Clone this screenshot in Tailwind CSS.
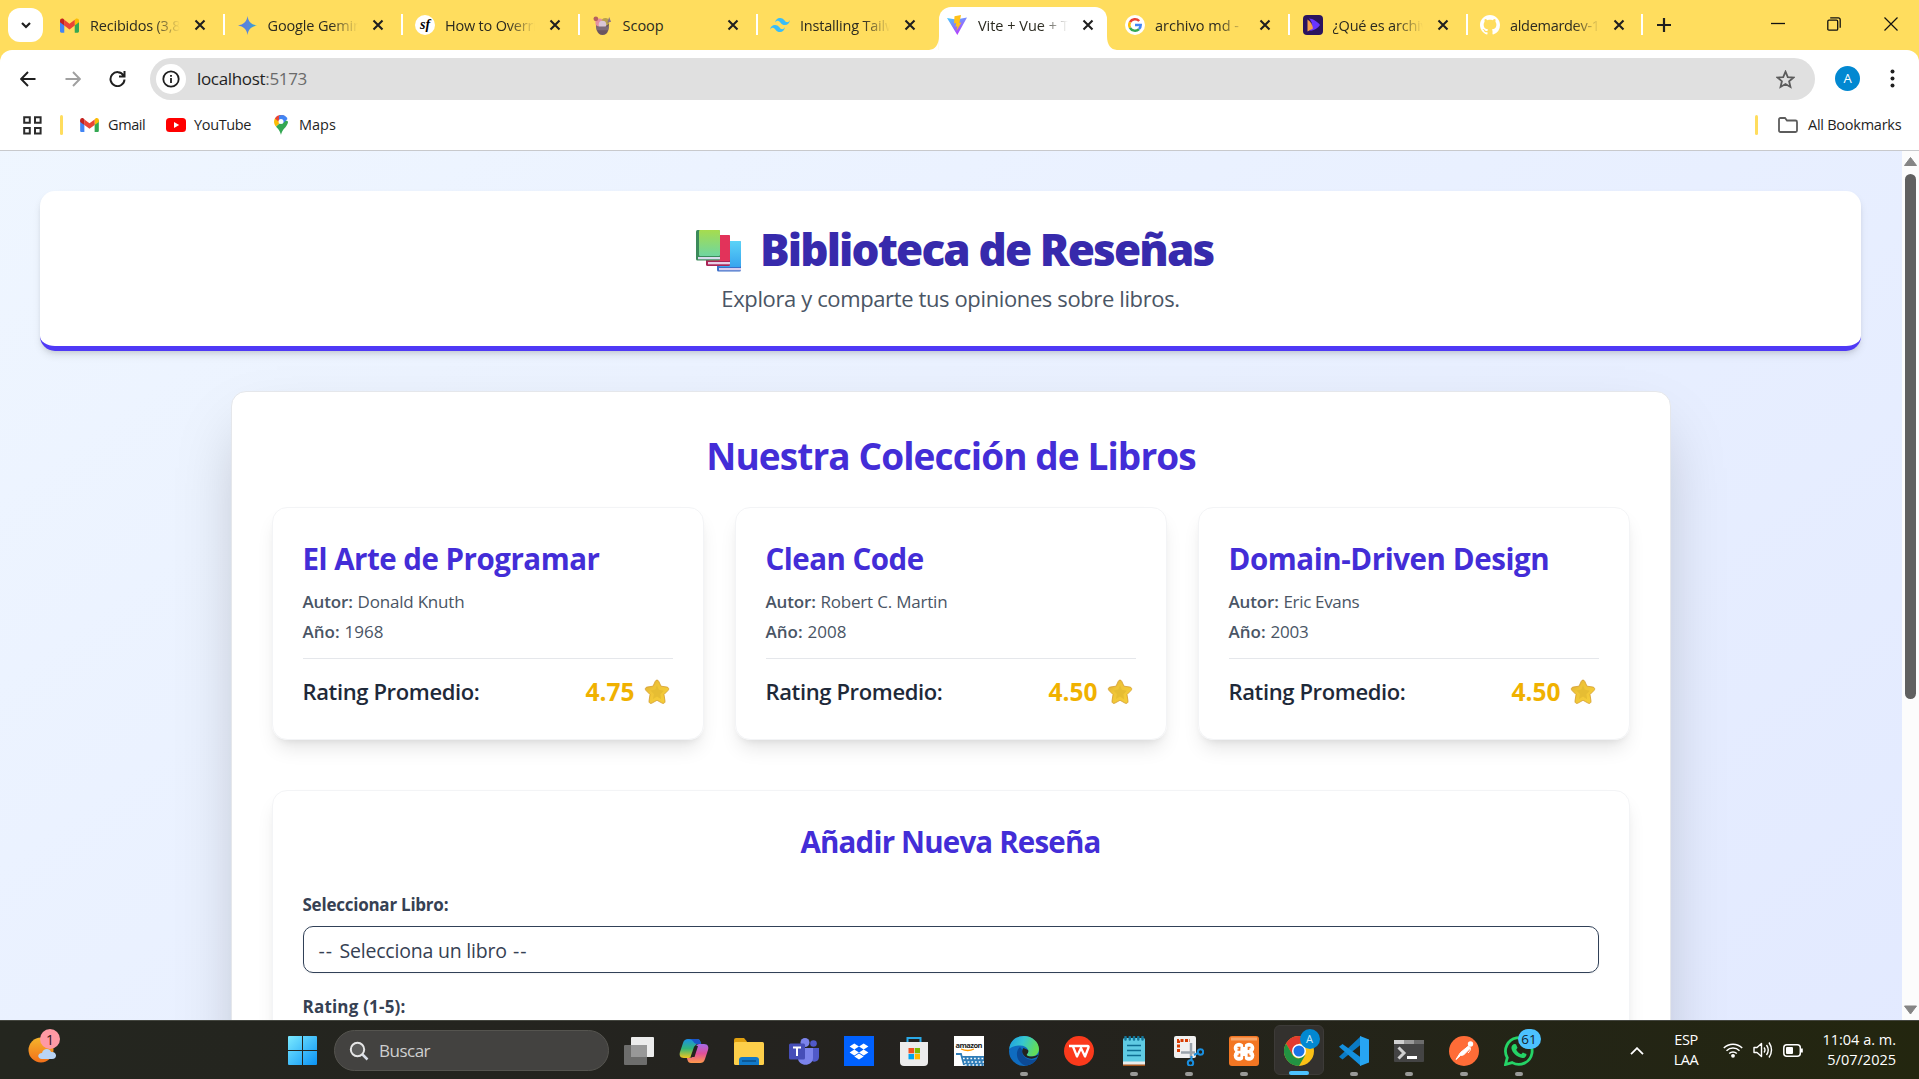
<!DOCTYPE html>
<html lang="es">
<head>
<meta charset="utf-8">
<title>Biblioteca de Reseñas</title>
<script src="https://cdn.jsdelivr.net/npm/@tailwindcss/browser@4"></script>
</head>
<body class="bg-white font-['Open_Sans','Noto_Sans',sans-serif]">
<svg width="0" height="0" class="absolute">
  <defs>
    <symbol id="x" viewBox="0 0 12 12"><path d="M1.500 1.500l9 9M10.500 1.500l-9 9" stroke="#1f1f1f" stroke-width="2.100" fill="none"/></symbol>
    <symbol id="gmail" viewBox="0 0 20 15"><path d="M0 2v11.600C0 14.400.6 15 1.400 15H4.500V6z" fill="#4285f4"/><path d="M20 2v11.600c0 .8-.6 1.400-1.400 1.400H15.500V6z" fill="#34a853"/><path d="M15.500 1.500V7.500L20 4.200V2.300C20 .3 17.800-.6 16.300.6z" fill="#fbbc04"/><path d="M4.500 7.500V1.500L10 5.600l5.500-4.100v6L10 11.600z" fill="#ea4335"/><path d="M0 2.300v1.900L4.500 7.500v-6L3.700.6C2.200-.6 0 .3 0 2.300z" fill="#c5221f"/></symbol>
    <linearGradient id="sg" x1="0" y1="0" x2="1" y2="1"><stop offset="0" stop-color="#d9a93a"/><stop offset=".35" stop-color="#efc437"/><stop offset="1" stop-color="#f6cf3a"/></linearGradient>
    <symbol id="star" viewBox="0 0 26 26"><path d="M11.300 2.200c.7-1.500 2.700-1.500 3.400 0l2.300 5 5.800.8c1.900.3 2.500 2.200 1.200 3.500l-4 4 1 6.600c.3 1.800-1.500 2.900-3 2L13 21.300l-5 2.800c-1.500.9-3.300-.2-3-2l1-6.600-4-4C.7 10.200 1.300 8.300 3.200 8L9 7.200z" fill="url(#sg)" stroke="#d49c2c" stroke-width=".8"/><path d="M13 6l1.800 4.700 5 1-3.400 3.600.7 5L13 17.500 9 20l.9-5-3.400-3.600 4.800-.8z" fill="#e6bd33"/></symbol>
  </defs>
</svg>
<div class="flex h-[1079px] w-[1919px] flex-col overflow-hidden">

  <!-- Tab strip -->
  <div class="flex h-[50px] shrink-0 items-start bg-[#ffdd5e] text-[14.5px] text-[#2b2a20]">
    <div class="ml-2 mt-2 flex h-[34px] w-[35px] items-center justify-center rounded-xl bg-white"><svg class="size-3" viewBox="0 0 12 12"><path d="M2 4l4 4 4-4" stroke="#1f1f1f" stroke-width="2.200" fill="none"/></svg></div>
    <div class="ml-[17px] flex h-[50px]">
      <div class="flex w-[177.500px] items-start pt-[14px]">
        <svg class="mt-[4px] h-[15px] w-[19px]"><use href="#gmail"/></svg>
        <div class="ml-[11px] h-[22px] w-[90px] overflow-hidden whitespace-nowrap leading-[24px] tracking-[-0.200px] mask-r-from-70%">Recibidos (3,88</div>
        <svg class="ml-[14px] mt-[5px] size-3"><use href="#x"/></svg>
        <div class="ml-[17px] h-[21px] w-[2px] bg-white"></div>
      </div>
      <div class="flex w-[177.500px] items-start pt-[14px]">
        <svg class="mt-[2px] h-[19px] w-[19px]" viewBox="0 0 20 20"><defs><linearGradient id="gem"><stop offset="0" stop-color="#4a7bea"/><stop offset=".5" stop-color="#5a86d9"/><stop offset="1" stop-color="#2aa9d2"/></linearGradient></defs><path d="M10 0c.8 5.800 4 9.200 10 10-6 .8-9.200 4.200-10 10-.8-5.800-4-9.200-10-10 6-.8 9.200-4.200 10-10z" fill="url(#gem)"/></svg>
        <div class="ml-[11px] h-[22px] w-[90px] overflow-hidden whitespace-nowrap leading-[24px] tracking-[-0.150px] mask-r-from-70%">Google Gemini</div>
        <svg class="ml-[14px] mt-[5px] size-3"><use href="#x"/></svg>
        <div class="ml-[17px] h-[21px] w-[2px] bg-white"></div>
      </div>
      <div class="flex w-[177.500px] items-start pt-[14px]">
        <div class="mt-px flex size-5 items-center justify-center rounded-full bg-white font-['Liberation_Serif'] text-[14px] font-bold italic text-black leading-none">sf</div>
        <div class="ml-[10px] h-[22px] w-[90px] overflow-hidden whitespace-nowrap leading-[24px] tracking-[-0.200px] mask-r-from-70%">How to Overrid</div>
        <svg class="ml-[14px] mt-[5px] size-3"><use href="#x"/></svg>
        <div class="ml-[17px] h-[21px] w-[2px] bg-white"></div>
      </div>
      <div class="flex w-[177.500px] items-start pt-[14px]">
        <svg class="mt-[2px] h-[19px] w-[19px]" viewBox="0 0 20 20"><path d="M3 9l14-1-1 7c-.5 3-3 5-6 5s-5-2-6-5z" fill="#6b5560"/><circle cx="7" cy="7" r="4.500" fill="#e58fa0"/><circle cx="13" cy="6" r="4" fill="#b9a04c"/><circle cx="10" cy="9" r="4" fill="#d9c6d6"/><circle cx="3" cy="3" r="2.500" fill="#b5605f"/><path d="M17 1l2 5-4 1z" fill="#8a7286"/><path d="M3 11h14l-1 4H4z" fill="#7d6a78"/></svg>
        <div class="ml-[11px] h-[22px] w-[90px] overflow-hidden whitespace-nowrap leading-[24px]">Scoop</div>
        <svg class="ml-[14px] mt-[5px] size-3"><use href="#x"/></svg>
        <div class="ml-[17px] h-[21px] w-[2px] bg-white"></div>
      </div>
      <div class="flex w-[160px] items-start pt-[14px]">
        <svg class="mt-[4px] h-[14px] w-[20px]" viewBox="0 0 20 12" preserveAspectRatio="none"><path d="M5 4C5.700 1.300 7.300 0 10 0c4 0 4.500 3 6.500 3.500 1.300.3 2.500-.2 3.500-1.500-.7 2.700-2.300 4-5 4-4 0-4.500-3-6.500-3.500C7.200 2.200 6 2.700 5 4zM0 10C.7 7.300 2.300 6 5 6c4 0 4.500 3 6.500 3.500 1.300.3 2.500-.2 3.500-1.500-.7 2.700-2.300 4-5 4-4 0-4.500-3-6.500-3.500C2.200 8.200 1 8.700 0 10z" fill="#38bdf8"/></svg>
        <div class="ml-[10px] h-[22px] w-[90px] overflow-hidden whitespace-nowrap leading-[24px] tracking-[-0.200px] mask-r-from-70%">Installing Tailwi</div>
        <svg class="ml-[14px] mt-[5px] size-3"><use href="#x"/></svg>
      </div>
      <div class="flex w-[187px] items-start">
        <svg class="mt-[36px] h-[14px] w-[10px] -ml-[1px]" viewBox="0 0 10 14"><path d="M10 0v14H0c6 0 10-5 10-14z" fill="#fff"/></svg>
        <div class="flex h-[50px] w-[170px] items-start rounded-t-xl bg-white pl-[8px] pt-[7px] mt-[7px]">
          <svg class="mt-px h-[20px] w-[20px]" viewBox="0 0 20 20"><defs><linearGradient id="vi" x1="0" x2=".6" y2="1"><stop offset="0" stop-color="#41d1ff"/><stop offset="1" stop-color="#bd34fe"/></linearGradient></defs><path d="M0 3l9 1.500L20 2.500 10.300 20z" fill="url(#vi)"/><path d="M14 0L7.500 1.200 7 8.500l2.200-.4-.7 3.600 1.900-.5-1 4.800 5-8.500-2 .4z" fill="#ffc21a"/></svg>
          <div class="ml-[11px] h-[22px] w-[90px] overflow-hidden whitespace-nowrap leading-[24px] mask-r-from-70%">Vite + Vue + Ts</div>
          <svg class="ml-[14px] mt-[5px] size-3"><use href="#x"/></svg>
        </div>
        <svg class="mt-[36px] h-[14px] w-[10px]" viewBox="0 0 10 14"><path d="M0 0v14h10C4 14 0 9 0 0z" fill="#fff"/></svg>
      </div>
      <div class="flex w-[177.500px] items-start pt-[14px] pl-[9px] -ml-[1px]">
        <svg class="mt-px size-[20px] shrink-0" viewBox="0 0 20 20"><circle cx="10" cy="10" r="10" fill="#fff"/><g fill="none" stroke-width="2.500"><path d="M14.200 6A5.800 5.800 0 0 0 5 7.200" stroke="#ea4335"/><path d="M5 7.200a5.800 5.800 0 0 0 0 5.600" stroke="#fbbc05"/><path d="M5 12.800a5.800 5.800 0 0 0 8.900 1.400" stroke="#34a853"/><path d="M13.900 14.200A5.800 5.800 0 0 0 15.700 10H10" stroke="#4285f4"/></g></svg>
        <div class="ml-[10px] h-[22px] w-[90px] shrink-0 overflow-hidden whitespace-nowrap leading-[24px] mask-r-from-70%">archivo md -</div>
        <svg class="ml-[14px] mt-[5px] size-3 shrink-0"><use href="#x"/></svg>
        <div class="ml-[17px] h-[21px] w-[2px] shrink-0 bg-white"></div>
      </div>
      <div class="flex w-[177.500px] items-start pt-[14px] pl-[9px]">
        <svg class="mt-px size-[20px] shrink-0" viewBox="0 0 20 20"><rect width="20" height="20" rx="4" fill="#2b145f"/><path d="M6 3.500c4 0 9 3.500 11 6.500-2 3-6 5.500-10 6 3-5 3-8-1-12.500z" fill="#6a35ff"/><path d="M4.500 4.500v12l5.500-3c-.5-4-2.500-7-5.500-9z" fill="#f7a04b"/></svg>
        <div class="ml-[10px] h-[22px] w-[90px] shrink-0 overflow-hidden whitespace-nowrap leading-[24px] tracking-[-0.200px] mask-r-from-70%">¿Qué es archivo</div>
        <svg class="ml-[14px] mt-[5px] size-3 shrink-0"><use href="#x"/></svg>
        <div class="ml-[17px] h-[21px] w-[2px] shrink-0 bg-white"></div>
      </div>
      <div class="flex w-[177.500px] items-start pt-[14px] pl-[9px]">
        <svg class="mt-px size-[20px] shrink-0" viewBox="0 0 16 16"><path fill="#fff" d="M8 0C3.580 0 0 3.580 0 8c0 3.540 2.290 6.530 5.470 7.590.4.07.55-.17.55-.38 0-.19-.01-.82-.01-1.490-2.010.37-2.530-.49-2.690-.94-.09-.23-.48-.94-.82-1.130-.28-.15-.68-.52-.01-.53.63-.01 1.080.58 1.230.82.72 1.210 1.870.87 2.330.66.07-.52.28-.87.51-1.070-1.780-.2-3.640-.89-3.640-3.950 0-.87.31-1.590.82-2.150-.08-.2-.36-1.020.08-2.120 0 0 .67-.21 2.200.82.64-.18 1.320-.27 2-.27s1.360.09 2 .27c1.530-1.040 2.200-.82 2.200-.82.44 1.100.16 1.920.08 2.120.51.56.82 1.270.82 2.150 0 3.070-1.870 3.750-3.650 3.950.29.25.54.73.54 1.480 0 1.070-.01 1.930-.01 2.200 0 .21.15.46.55.38A8.010 8.010 0 0 0 16 8c0-4.420-3.580-8-8-8z"/></svg>
        <div class="ml-[10px] h-[22px] w-[90px] shrink-0 overflow-hidden whitespace-nowrap leading-[24px] tracking-[-0.300px] mask-r-from-70%">aldemardev-12</div>
        <svg class="ml-[13px] mt-[5px] size-3 shrink-0"><use href="#x"/></svg>
        <div class="ml-[16px] h-[21px] w-[2px] shrink-0 bg-white"></div>
      </div>
    </div>
    <svg class="ml-[8px] mt-[18px] size-[14px]" viewBox="0 0 14 14"><path d="M7 0v14M0 7h14" stroke="#1f1f1f" stroke-width="2.200"/></svg>
    <div class="ml-auto mr-[21px] flex items-start pt-[17px]">
      <svg class="h-[16px] w-[14px]" viewBox="0 0 14 16"><path d="M0 6.500h14" stroke="#111" stroke-width="1.300"/></svg>
      <svg class="ml-[42px] size-[14px]" viewBox="0 0 14 14"><path d="M2 3.200h7.500q1.200 0 1.200 1.200V12q0 1.200-1.200 1.200H2q-1.200 0-1.200-1.200V4.400Q.8 3.200 2 3.200zM3.200 .8h8q2 0 2 2v8" stroke="#111" stroke-width="1.300" fill="none"/></svg>
      <svg class="ml-[43px] size-[14px]" viewBox="0 0 14 14"><path d="M.5.5l13 13M13.500.5l-13 13" stroke="#111" stroke-width="1.200"/></svg>
    </div>
  </div>

  <!-- Toolbar -->
  <div class="h-[58px] shrink-0 bg-[#ffdd5e]"><div class="flex h-[58px] items-start rounded-t-xl bg-white pt-[8px]">
    <svg class="ml-[20px] mt-[13px] size-[16px]" viewBox="0 0 16 16"><path d="M15.500 8H1.500M8 1L1.200 8 8 15" stroke="#1f1f1f" stroke-width="1.900" fill="none"/></svg>
    <svg class="ml-[29px] mt-[13px] size-[16px]" viewBox="0 0 16 16"><path d="M.5 8h14M8 1l6.800 7L8 15" stroke="#a0a0a0" stroke-width="1.900" fill="none"/></svg>
    <svg class="ml-[28px] mt-[12px] size-[17px]" viewBox="0 0 17 17"><path d="M14.500 5.500A7 7 0 1 0 15.500 9.500M15.500 1v5.500H10" stroke="#1f1f1f" stroke-width="2" fill="none"/></svg>
    <div class="ml-[24px] flex h-[42px] w-[1665px] items-center rounded-full bg-[#e0e0e0] pl-[6px]">
      <div class="flex size-[30px] items-center justify-center rounded-full bg-white"><svg class="size-[18px]" viewBox="0 0 18 18"><circle cx="9" cy="9" r="7.700" fill="none" stroke="#1f1f1f" stroke-width="1.800"/><path d="M9 8v5M9 5v1.700" stroke="#1f1f1f" stroke-width="1.800"/></svg></div>
      <div class="ml-[11px] whitespace-nowrap text-[17px] leading-[24px] tracking-[-0.330px] text-[#1f1f1f]">localhost<span class="text-[#6a6a6a]">:5173</span></div>
      <svg class="ml-auto mr-[20px] size-[19px]" viewBox="0 0 20 20"><path d="M10 1.800l2.400 5.600 6 .5-4.600 4 1.400 5.900L10 14.700l-5.200 3.100 1.400-5.900-4.600-4 6-.5z" fill="none" stroke="#5c5c5c" stroke-width="1.900"/></svg>
    </div>
    <div class="ml-[20px] mt-[8px] flex size-[25px] items-center justify-center rounded-full bg-[#0288d1] text-[13px] text-white">A</div>
    <svg class="ml-[30px] mt-[11px] h-[19px] w-[5px]" viewBox="0 0 5 19"><g fill="#1f1f1f"><circle cx="2.500" cy="2.500" r="2"/><circle cx="2.500" cy="9.500" r="2"/><circle cx="2.500" cy="16.500" r="2"/></g></svg>
  </div></div>

  <!-- Bookmarks bar -->
  <div class="flex h-[43px] shrink-0 items-start border-b border-[#c8c9cc] bg-white pt-[7px] text-[14.5px] leading-[20px] text-[#1f1f1f]">
    <svg class="ml-[23px] mt-[1px] size-[19px]" viewBox="0 0 19 19"><path d="M1.200 1.200h5.600v5.600H1.200zM12 1.200h5.600v5.600H12zM1.200 12h5.600v5.600H1.200zM12 12h5.600v5.600H12z" fill="none" stroke="#2b2b2b" stroke-width="2"/></svg>
    <div class="ml-[18px] h-[20px] w-[3px] rounded bg-[#ffdd5e]"></div>
    <svg class="ml-[17px] mt-[3px] h-[14px] w-[19px]"><use href="#gmail"/></svg>
    <span class="ml-[9px] w-[38px] whitespace-nowrap tracking-[-0.400px]">Gmail</span>
    <svg class="ml-[20px] mt-[3px] h-[14px] w-[20px]" viewBox="0 0 20 14"><rect width="20" height="14" rx="3.500" fill="#f00"/><path d="M8 4l5.200 3L8 10z" fill="#fff"/></svg>
    <span class="ml-[8px] w-[58px] whitespace-nowrap tracking-[-0.350px]">YouTube</span>
    <svg class="ml-[22px] h-[20px] w-[14px]" viewBox="0 0 14 20"><path d="M2 11.500c2 2.500 4 4 5 8.500 1-4.500 3-6 5-8.500C13.500 9.500 14 8 14 6.500L10 4.500z" fill="#34a853"/><path d="M.9 3.500C-.5 6-.2 9 2 11.500l9.500-9L8 1z" fill="#fbbc04"/><path d="M.9 3.500L5 7 11 1.200C8-1 3-.5.9 3.500z" fill="#ea4335"/><path d="M5 1c3-2 7-.5 8.500 3L8.800 8.600 5 5z" fill="#4285f4"/><circle cx="7" cy="6.500" r="2.500" fill="#fff"/></svg>
    <span class="ml-[11px] w-[37px] whitespace-nowrap">Maps</span>
    <div class="ml-auto h-[20px] w-[3px] rounded bg-[#ffdd5e]"></div>
    <svg class="ml-[20px] mt-[2px] h-[16px] w-[20px]" viewBox="0 0 20 16"><path d="M1 2.500C1 1.600 1.600 1 2.500 1H7l2 2.500h8.500c.9 0 1.500.6 1.500 1.500v8.500c0 .9-.6 1.500-1.500 1.500h-15C1.600 15 1 14.400 1 13.500z" fill="none" stroke="#5c5c5c" stroke-width="1.800"/></svg>
    <span class="ml-[10px] mr-[16px] w-[95px] whitespace-nowrap tracking-[-0.250px]">All Bookmarks</span>
  </div>

  <!-- Page viewport -->
  <div class="flex h-[869px] shrink-0 overflow-hidden">
    <div class="h-[1375px] w-[1902px] bg-linear-to-br from-blue-50 to-indigo-100 p-[40px]">
      <header class="h-[160px] w-[1821px] rounded-[15px] border-b-[5px] border-indigo-600 bg-white pt-[30px] text-center shadow-[0_5px_8px_-1px_rgba(0,0,0,0.1),0_3px_5px_-2px_rgba(0,0,0,0.1)]">
        <h1 class="flex h-[54px] items-center text-[44px] leading-[54px] tracking-[-1.850px] font-extrabold text-indigo-800">
          <svg class="ml-[656px] mt-[6px] h-[42px] w-[45px]" viewBox="0 0 45 42"><defs><linearGradient id="bg1" x2="0" y2="1"><stop offset="0" stop-color="#a6dc4e"/><stop offset="1" stop-color="#6fd6a0"/></linearGradient><linearGradient id="bg2" x2="0" y2="1"><stop offset="0" stop-color="#5bd3f7"/><stop offset="1" stop-color="#38a4ee"/></linearGradient></defs><rect x="21" y="11" width="24" height="30.500" rx="1.500" fill="#3b6fc9"/><rect x="23" y="11" width="22" height="26" rx="1.200" fill="url(#bg2)"/><rect x="23" y="38" width="22" height="2.300" fill="#d9cdee"/><rect x="10" y="5" width="24" height="31" rx="1.500" fill="#ab2456"/><rect x="12" y="5" width="22" height="26" rx="1.200" fill="#e2335a"/><rect x="12" y="32" width="22" height="2.300" fill="#e8cfe6"/><rect x="0" y="0" width="24" height="30.500" rx="1.500" fill="#3b8a5a"/><rect x="3" y="0" width="21" height="26" rx="1.200" fill="url(#bg1)"/><rect x="2" y="27" width="22" height="2.300" fill="#d9dcee"/></svg>
          <span class="ml-[19px] pt-[2px] whitespace-nowrap">Biblioteca de Reseñas</span>
        </h1>
        <p class="mt-[6px] text-[22px] leading-[35px] tracking-[-0.380px] text-gray-600">Explora y comparte tus opiniones sobre libros.</p>
      </header>
      <main class="mx-auto mt-[40px] h-[1100px] w-[1440px] rounded-[15px] border border-gray-200 bg-white px-[39.5px] pb-[40px] pt-[41px] shadow-[0_31px_62px_-15px_rgba(0,0,0,0.25)]">
        <h2 class="text-center text-[37px] leading-[45px] tracking-[-0.900px] font-bold text-indigo-700">Nuestra Colección de Libros</h2>
        <div class="mt-[29px] grid w-[1358px] grid-cols-3 gap-[31px] whitespace-nowrap">
          <article class="h-[233px] rounded-[15px] border border-gray-100 px-[30px] pt-[31px] shadow-[0_12px_19px_-4px_rgba(0,0,0,0.1),0_5px_8px_-5px_rgba(0,0,0,0.1)]">
            <h3 class="text-[29.5px] leading-[40px] tracking-[-0.500px] font-bold text-indigo-700">El Arte de Programar</h3>
            <p class="mt-[10px] flex gap-[5px] text-[17px] leading-[25px] text-gray-600"><b class="w-[50px] tracking-[-0.150px] font-semibold">Autor:</b><span class="tracking-[-0.200px]">Donald Knuth</span></p>
            <p class="mt-[5px] flex gap-[5px] text-[17px] leading-[25px] text-gray-600"><b class="w-[37px] font-semibold">Año:</b><span>1968</span></p>
            <div class="mt-[14px] flex items-center justify-between border-t border-gray-200 pt-[15px] leading-[35px]"><span class="text-[22px] tracking-[-0.370px] font-semibold text-gray-800">Rating Promedio:</span><span class="flex items-center pr-[3px] text-[24.500px] font-bold text-yellow-500">4.75<svg class="ml-[9px] mt-px size-[26px]"><use href="#star"/></svg></span></div>
          </article>
          <article class="h-[233px] rounded-[15px] border border-gray-100 px-[30px] pt-[31px] shadow-[0_12px_19px_-4px_rgba(0,0,0,0.1),0_5px_8px_-5px_rgba(0,0,0,0.1)]">
            <h3 class="text-[29.5px] leading-[40px] tracking-[-0.520px] font-bold text-indigo-700">Clean Code</h3>
            <p class="mt-[10px] flex gap-[5px] text-[17px] leading-[25px] text-gray-600"><b class="w-[50px] tracking-[-0.150px] font-semibold">Autor:</b><span class="tracking-[-0.200px]">Robert C. Martin</span></p>
            <p class="mt-[5px] flex gap-[5px] text-[17px] leading-[25px] text-gray-600"><b class="w-[37px] font-semibold">Año:</b><span>2008</span></p>
            <div class="mt-[14px] flex items-center justify-between border-t border-gray-200 pt-[15px] leading-[35px]"><span class="text-[22px] tracking-[-0.370px] font-semibold text-gray-800">Rating Promedio:</span><span class="flex items-center pr-[3px] text-[24.500px] font-bold text-yellow-500">4.50<svg class="ml-[9px] mt-px size-[26px]"><use href="#star"/></svg></span></div>
          </article>
          <article class="h-[233px] rounded-[15px] border border-gray-100 px-[30px] pt-[31px] shadow-[0_12px_19px_-4px_rgba(0,0,0,0.1),0_5px_8px_-5px_rgba(0,0,0,0.1)]">
            <h3 class="text-[29.5px] leading-[40px] tracking-[-0.430px] font-bold text-indigo-700">Domain-Driven Design</h3>
            <p class="mt-[10px] flex gap-[5px] text-[17px] leading-[25px] text-gray-600"><b class="w-[50px] tracking-[-0.150px] font-semibold">Autor:</b><span class="tracking-[-0.330px]">Eric Evans</span></p>
            <p class="mt-[5px] flex gap-[5px] text-[17px] leading-[25px] text-gray-600"><b class="w-[37px] font-semibold">Año:</b><span class="tracking-[-0.200px]">2003</span></p>
            <div class="mt-[14px] flex items-center justify-between border-t border-gray-200 pt-[15px] leading-[35px]"><span class="text-[22px] tracking-[-0.370px] font-semibold text-gray-800">Rating Promedio:</span><span class="flex items-center pr-[3px] text-[24.500px] font-bold text-yellow-500">4.50<svg class="ml-[9px] mt-px size-[26px]"><use href="#star"/></svg></span></div>
          </article>
        </div>
        <section class="mt-[50px] h-[520px] w-[1358px] rounded-[15px] border border-gray-100 px-[30px] pt-[31px] shadow-[0_12px_19px_-4px_rgba(0,0,0,0.1),0_5px_8px_-5px_rgba(0,0,0,0.1)]">
          <h2 class="text-center text-[29.5px] leading-[40px] tracking-[-0.820px] font-bold text-indigo-700">Añadir Nueva Reseña</h2>
          <div class="mt-[30px] text-[17px] leading-[25px] tracking-[-0.240px] font-bold text-gray-700">Seleccionar Libro:</div>
          <div class="mt-[9px] flex h-[47px] items-center whitespace-pre rounded-[10px] border border-slate-700 px-[15px] pt-[2px] text-[19.500px] tracking-[-0.200px] text-gray-700 shadow-xs"><span class="tracking-[1.100px]">-- </span>Selecciona un libro<span class="tracking-[1.100px]"> --</span></div>
          <div class="mt-[21px] text-[17px] leading-[25px] tracking-[0.200px] font-bold text-gray-700">Rating (1-5):</div>
        </section>
      </main>
    </div>
    <div class="flex h-[869px] w-[17px] flex-col items-center bg-[#fcfcfc]">
      <svg class="mt-[6px] h-[9px] w-[13px]" viewBox="0 0 13 9"><path d="M6.500.5L12.500 8.500H.5z" fill="#858585" stroke="#858585" stroke-linejoin="round"/></svg>
      <div class="mt-[8px] h-[525px] w-[11px] rounded-full bg-[#606060]"></div>
      <svg class="mt-auto mb-[5px] h-[10px] w-[13px]" viewBox="0 0 13 10"><path d="M6.500 9L12.500 1H.5z" fill="#858585" stroke="#858585" stroke-linejoin="round"/></svg>
    </div>
  </div>

  <!-- Taskbar -->
  <div class="relative flex h-[59px] shrink-0 border-t border-[#44463f] bg-linear-to-r from-[#24261f] via-[#24221f] to-[#23260f] text-white">
    <div class="relative ml-[28px] mt-[8px] h-[36px] w-[34px]">
      <svg class="h-[36px] w-[34px]" viewBox="0 0 34 36"><defs><linearGradient id="sun" x2="0" y2="1"><stop offset="0" stop-color="#f6b52c"/><stop offset="1" stop-color="#f2701a"/></linearGradient></defs><circle cx="13" cy="21" r="12.500" fill="url(#sun)"/><path d="M14 30c-5 0-5-6 0-6 1-5 8-5 9-1 6-1 7 7 1 7z" fill="#b9d4f5"/></svg>
      <div class="absolute left-[12px] top-0 flex size-5 items-center justify-center rounded-full bg-[#ff99a4] text-[14px] text-[#301418]">1</div>
    </div>
    <svg class="ml-[226px] mt-[15px] size-[29px]" viewBox="0 0 29 29"><defs><linearGradient id="win" x2="1" y2="1"><stop offset="0" stop-color="#7beaff"/><stop offset="1" stop-color="#0a93f5"/></linearGradient></defs><path d="M0 1q0-1 1-1h13v14H0zM15 0h13q1 0 1 1v13H15zM0 15h14v14H1q-1 0-1-1zM15 15h14v13q0 1-1 1H15z" fill="url(#win)"/></svg>
    <div class="ml-[17px] mt-[9px] flex h-[41px] w-[275px] items-center rounded-full border border-[#55544f] bg-[#434240] text-[17px] text-[#cfcfcf]">
      <svg class="ml-[14px] size-[20px]" viewBox="0 0 20 20"><circle cx="8.500" cy="8.500" r="6.700" fill="#5b5b5a" stroke="#e6e6e6" stroke-width="2"/><path d="M13.500 13.500l5 5" stroke="#d8dde6" stroke-width="2.500"/></svg>
      <span class="ml-[10px] tracking-[-0.500px]">Buscar</span>
    </div>
    <div class="ml-[2.500px] flex">
      <div class="flex w-[55px] flex-col items-center pt-[15px]"><svg class="size-[30px]" viewBox="0 0 30 30"><rect x="7" y="1" width="23" height="20" rx="1" fill="#ececec"/><rect x="0" y="9" width="23" height="20" rx="1" fill="#6d6d6c"/><rect x="7" y="9" width="16" height="12" fill="#989898"/></svg></div>
      <div class="flex w-[55px] flex-col items-center pt-[15px]"><svg class="size-[30px]" viewBox="0 0 30 30"><defs><linearGradient id="c1" x2="0" y2="1"><stop offset="0" stop-color="#1a8fe8"/><stop offset=".5" stop-color="#31b57a"/><stop offset="1" stop-color="#f2c51f"/></linearGradient><linearGradient id="c2" x2="0" y2="1"><stop offset="0" stop-color="#a56be8"/><stop offset=".5" stop-color="#e0509a"/><stop offset="1" stop-color="#ff9a4a"/></linearGradient></defs><path d="M9 3h9c2 0 3 1 3.500 3l.7 2h-3c-2 0-3 1-3.600 3l-2.500 8c-.6 2-1.500 3-3.500 3H5c-4 0-5-3-4-6l3-9c1-3 2.500-4 5-4z" fill="url(#c1)"/><path d="M21 27h-9c-2 0-3-1-3.500-3l-.7-2h3c2 0 3-1 3.600-3l2.500-8c.6-2 1.500-3 3.500-3H25c4 0 5 3 4 6l-3 9c-1 3-2.500 4-5 4z" fill="url(#c2)"/><path d="M9 3h9c2 0 3 1 3.500 3l.7 2h-4C14 8 15 3 9 3z" fill="#1b55c9"/><path d="M19 10l-3.500 11h-4L15 11c.4-1 1-1.300 4-1z" fill="#24221f"/></svg></div>
      <div class="flex w-[55px] flex-col items-center pt-[15px]"><svg class="size-[30px]" viewBox="0 0 30 30"><path d="M0 4q0-2 2-2h8l3 3.500V12H0z" fill="#e0a010"/><rect y="6" width="30" height="23" rx="1.500" fill="#fdcf4a"/><path d="M5 29v-5q0-3 3-3h14q3 0 3 3v5z" fill="#1179c9"/><path d="M8 25h14" stroke="#0b4f86" stroke-width="1.500"/></svg></div>
      <div class="flex w-[55px] flex-col items-center pt-[15px]"><svg class="size-[30px]" viewBox="0 0 30 30"><circle cx="24.500" cy="7.500" r="3.300" fill="#5059c9"/><path d="M19 12h11v9c0 6-8 6-9 1z" fill="#5059c9"/><circle cx="16" cy="6.500" r="4.500" fill="#7b83eb"/><path d="M9 12h15v10c0 9-15 9-15 0z" fill="#7b83eb"/><rect y="7.500" width="16" height="16" rx="1.500" fill="#464eb8"/><path d="M4 11.500h8M8 11.500V20" stroke="#fff" stroke-width="2"/></svg></div>
      <div class="flex w-[55px] flex-col items-center pt-[15px]"><svg class="size-[30px]" viewBox="0 0 30 30"><rect width="30" height="30" fill="#0061ff"/><path d="M10.300 7.500L15 10.500l-4.700 3-4.700-3zM19.700 7.500l4.700 3-4.700 3-4.700-3zM5.600 16.500l4.700-3 4.700 3-4.700 3zM19.700 13.500l4.700 3-4.700 3-4.700-3zM10.300 20.500l4.700-3 4.700 3-4.700 3z" fill="#fff"/></svg></div>
      <div class="flex w-[55px] flex-col items-center pt-[15px]"><svg class="size-[30px]" viewBox="0 0 30 30"><path d="M8.500 7V2h13v5" fill="none" stroke="#2aa9e8" stroke-width="2"/><path d="M1 6h28v20q0 4-4 4H5q-4 0-4-4z" fill="#ececec"/><path d="M9.500 12H15v5.300H9.500z" fill="#f25022"/><path d="M15.700 12h5.300v5.300h-5.300z" fill="#7fba00"/><path d="M9.500 18H15v5.300H9.500z" fill="#00a4ef"/><path d="M15.700 18h5.300v5.300h-5.300z" fill="#ffb900"/></svg></div>
      <div class="flex w-[55px] flex-col items-center pt-[15px]"><svg class="size-[30px]" viewBox="0 0 30 30"><rect width="30" height="30" fill="#fff"/><text x="1.500" y="12" font-family="Open Sans" font-weight="700" font-size="7.500" textLength="27" fill="#222">amazon</text><path d="M7 13q7 3 13 0" stroke="#f90" fill="none" stroke-width="1.300"/><path d="M2 18h5l3 11" stroke="#2f7db8" stroke-width="1.800" fill="none"/><path d="M8 20h22v10H11z" fill="#2f7db8"/><path d="M9 22.500h21M10 26h20M11 29h19" stroke="#fff" stroke-width="1.400" stroke-dasharray="1.700 2"/></svg></div>
      <div class="flex w-[55px] flex-col items-center pt-[15px]"><svg class="size-[30px]" viewBox="0 0 30 30"><defs><linearGradient id="e1" x2="1" y2=".3"><stop offset="0" stop-color="#1b9de2"/><stop offset=".5" stop-color="#36c6d0"/><stop offset="1" stop-color="#62dc5a"/></linearGradient></defs><circle cx="15" cy="15" r="15" fill="#0f6cc0"/><path d="M.3 13C1 5 7 0 15 0c8 0 15 6 15 13 0 5-4 7.500-8 7.500-3 0-5-1-4-2.500 1.500-1.500 1.500-3 1-4-1-3-4-4.500-8-4.500C6.500 9.500 2 11 .3 13z" fill="url(#e1)"/><path d="M11 11c-6 5-3 16 6 18.800 5-.8 9-3.500 10.800-7C22 26 12 22 13 13.500z" fill="#0c4a96"/><path d="M14.500 12c-3 3-1 9 6 10.500 3 .5 6-.5 7.500-1.500l1.500-2.500q-4 2.500-7.500 2c-3 0-5-1-4-2.500 1.500-1.500 1.500-3 1-4z" fill="#24221f"/></svg><div class="mt-[6px] h-1 w-2 rounded-full bg-[#9a9a98]"></div></div>
      <div class="flex w-[55px] flex-col items-center pt-[15px]"><svg class="size-[30px]" viewBox="0 0 30 30"><circle cx="15" cy="15" r="15" fill="#fb3a1c"/><path d="M5 10h18.500q1.500 0 1 1.500l-3.500 9-4-8.500-4 8.500-4-10" fill="none" stroke="#fff" stroke-width="2.300" stroke-linejoin="round"/></svg></div>
      <div class="flex w-[55px] flex-col items-center pt-[15px]"><svg class="size-[30px]" viewBox="0 0 30 30"><rect x="4" y="2" width="22" height="28" rx="1.500" fill="#5fcbe3"/><path d="M4 25.500h22V29q0 1-1 1H5q-1 0-1-1z" fill="#e9ecec"/><path d="M4 28.500h22V30H4z" fill="#a5541c"/><path d="M8 9.500h14M8 14.500h14M8 19.500h14" stroke="#0e6d92" stroke-width="1.700"/><path d="M6.500 3.500V1M10.800 3.500V1M15 3.500V1M19.300 3.500V1M23.500 3.500V1" stroke="#14769a" stroke-width="2.500" stroke-linecap="round"/></svg><div class="mt-[6px] h-1 w-2 rounded-full bg-[#9a9a98]"></div></div>
      <div class="flex w-[55px] flex-col items-center pt-[15px]"><svg class="size-[30px]" viewBox="0 0 30 30"><rect width="22" height="22" rx="2" fill="#f0f0f0"/><path d="M4.500 16V4.500H16" fill="none" stroke="#d83b01" stroke-width="3" stroke-dasharray="3 1.500"/><path d="M17 7v15M7 16.500h14" stroke="#9aa3ab" stroke-width="2.500"/><circle cx="26.500" cy="16" r="2.700" fill="none" stroke="#1a8fe0" stroke-width="2"/><circle cx="16.500" cy="27" r="2.700" fill="none" stroke="#1a8fe0" stroke-width="2"/><path d="M17.500 24.500V20M24 17l-4 2" stroke="#1a8fe0" stroke-width="2"/></svg><div class="mt-[6px] h-1 w-2 rounded-full bg-[#9a9a98]"></div></div>
      <div class="flex w-[55px] flex-col items-center pt-[15px]"><svg class="size-[30px]" viewBox="0 0 30 30"><rect width="30" height="30" rx="3" fill="#f37623"/><path d="M2 1.500h26v3H2z" fill="#f8a66a"/><g fill="#fff"><circle cx="10" cy="12" r="5.300"/><circle cx="20" cy="12" r="5.300"/><circle cx="10" cy="19.500" r="5.300"/><circle cx="20" cy="19.500" r="5.300"/><path d="M9 12h12v7H9z"/></g><path d="M8.500 11.500h3M10.500 11.500v2.500h-2M8.500 20h2v-2.500M21.500 11.500h-2V14M21.500 20h-2v-2.500M15 7v4M15 24v-4" stroke="#f37623" stroke-width="1.700" fill="none"/></svg><div class="mt-[6px] h-1 w-2 rounded-full bg-[#9a9a98]"></div></div>
      <div class="relative flex w-[55px] flex-col items-center pt-[4px]"><div class="flex h-[50px] w-[50px] flex-col items-center rounded-md border border-[#3d3b38] bg-[#33312e] pt-[10px]"><svg class="size-[30px] shrink-0" viewBox="0 0 30 30"><circle cx="15" cy="15" r="15" fill="#fbc116"/><path d="M2 7.500A15 15 0 0 1 28 7.500H15L8.500 19z" fill="#e33b2e"/><path d="M2 7.500L8.500 18.800A7.500 7.500 0 0 0 15 22.500L21.500 18.700 15 30A15 15 0 0 1 2 7.500z" fill="#229342"/><circle cx="15" cy="15" r="7" fill="#fff"/><circle cx="15" cy="15" r="5.500" fill="#1a73e8"/></svg><div class="mt-[5px] h-1 w-5 shrink-0 rounded-full bg-[#4cc2ff]"></div></div><div class="absolute left-[28px] top-[8px] flex size-5 items-center justify-center rounded-full bg-[#0288d1] text-[11px] text-[#cfe8f5]">A</div></div>
      <div class="flex w-[55px] flex-col items-center pt-[15px]"><svg class="size-[30px]" viewBox="0 0 30 30"><path d="M22 0v8.500L3.500 23.500 0 20.700z" fill="#0b7ac4"/><path d="M22 30v-8.500L3.500 8 0 10.800z" fill="#1490df"/><path d="M21 0l9 3.500v23L21 30z" fill="#27a5f2"/></svg><div class="mt-[6px] h-1 w-2 rounded-full bg-[#9a9a98]"></div></div>
      <div class="flex w-[55px] flex-col items-center pt-[15px]"><svg class="size-[30px]" viewBox="0 0 30 30"><rect y="4" width="30" height="22" rx="1" fill="#444"/><path d="M0 4h10v4H0z" fill="#d0d0d0"/><path d="M10 4h10v4H10z" fill="#999"/><path d="M20 4h10v4H20z" fill="#6c6c6c"/><path d="M4.500 11.500l5.500 5.500-5.500 5.500" stroke="#d0d0d0" stroke-width="3" fill="none"/><path d="M13 21.500h10" stroke="#fff" stroke-width="3"/></svg><div class="mt-[6px] h-1 w-2 rounded-full bg-[#9a9a98]"></div></div>
      <div class="flex w-[55px] flex-col items-center pt-[15px]"><svg class="size-[30px]" viewBox="0 0 30 30"><circle cx="15" cy="15" r="15" fill="#ff6c37"/><circle cx="21.500" cy="8" r="2.700" fill="#fff"/><path d="M19.500 10l2 2-7 7-3 .5-4.500 4 3.500-5.500 1-1.500z" fill="#fff" stroke="#fff" stroke-width="1"/><path d="M21 12c1 1.500 0 3-2 5" stroke="#fff" fill="none"/></svg><div class="mt-[6px] h-1 w-2 rounded-full bg-[#9a9a98]"></div></div>
      <div class="relative flex w-[55px] flex-col items-center pt-[15px]"><svg class="size-[30px]" viewBox="0 0 30 30"><path d="M1.500 28.500l1.800-6.800A13.300 13.300 0 1 1 8.200 26.600z" fill="none" stroke="#25d366" stroke-width="2.800"/><path d="M10 8l2 .2 1.500 3.500-1.300 2c1.200 2.300 2.700 3.500 5 4.600l1.700-1.900 3.500 1.700c.3 2.700-2 4.100-4 4-5.500-.6-10.400-5.500-11-10-.1-1.700 1-3.400 2.600-4.100z" fill="#25d366"/></svg><div class="mt-[6px] h-1 w-2 rounded-full bg-[#9a9a98]"></div><div class="absolute left-[26px] top-[8px] flex h-5 w-[23px] items-center justify-center rounded-full bg-[#4cc2ff] text-[13.500px] text-[#15222b]">61</div></div>
    </div>
    <div class="ml-auto mr-[23px] flex whitespace-nowrap pt-[9px] text-[14.500px] leading-[20px]">
      <svg class="mt-[17px] h-[8px] w-[14px]" viewBox="0 0 14 8"><path d="M1 7.200l6-6 6 6" stroke="#fff" stroke-width="1.800" fill="none"/></svg>
      <div class="ml-[28px] flex w-[28px] flex-col items-center tracking-[-0.400px]"><span>ESP</span><span>LAA</span></div>
      <svg class="ml-[23px] mt-[12px] h-[16px] w-[20px]" viewBox="0 0 20 16"><g fill="none" stroke="#fff" stroke-width="1.500"><path d="M.8 6a13 13 0 0 1 18.400 0M3.500 8.800a9.200 9.200 0 0 1 13 0M6.200 11.500a5.400 5.400 0 0 1 7.600 0"/></g><circle cx="10" cy="13.800" r="1.900" fill="#fff"/></svg>
      <svg class="ml-[10px] mt-[11px] h-[18px] w-[20px]" viewBox="0 0 20 18"><g fill="none" stroke="#fff" stroke-width="1.400"><path d="M1 6.500h3L8.500 2.500v13L4 11.500H1z" stroke-linejoin="round"/><path d="M11 6.500q2 2.500 0 5M13.500 4q3.500 5 0 10M16 1.500q5 7.500 0 15"/></g></svg>
      <svg class="ml-[10px] mt-[14px] h-[13px] w-[20px]" viewBox="0 0 20 13"><rect x=".8" y=".8" width="16.500" height="11.400" rx="3" fill="none" stroke="#fff" stroke-width="1.500"/><rect x="3" y="3" width="7" height="7" rx="1" fill="#fff"/><path d="M18.800 4.500v4" stroke="#fff" stroke-width="2"/></svg>
      <div class="ml-[19px] flex w-[74px] flex-col items-end"><span>11:04 a. m.</span><span>5/07/2025</span></div>
    </div>
  </div>
</div>
</body>
</html>
